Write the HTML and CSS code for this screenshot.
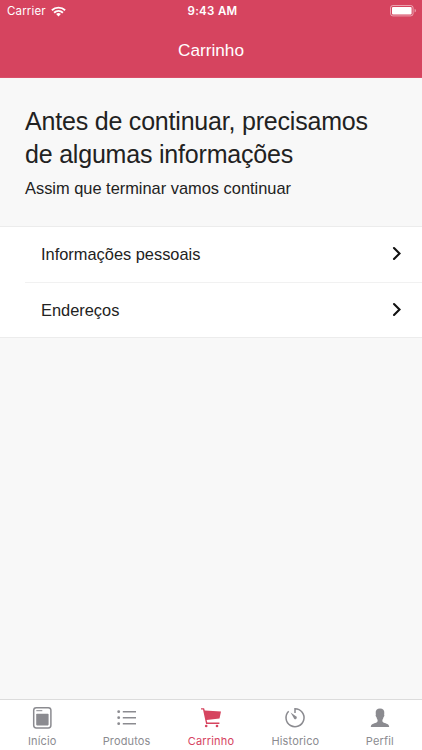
FILE: index.html
```
<!DOCTYPE html>
<html lang="pt-BR">
<head>
  <meta charset="UTF-8">
  <title>Carrinho</title>
  <link rel="stylesheet" href="styles.css">
</head>
<body>
  <header class="header">
    <div class="status-bar">
      <div class="carrier">
        <span>Carrier</span>
        <svg width="15" height="11" viewBox="0 0 15 11" fill="none" stroke="#fff" stroke-width="1.9">
          <path d="M0.9 4.3a9.5 9.5 0 0 1 13.2 0"/>
          <path d="M3.1 6.7a6.3 6.3 0 0 1 8.8 0"/>
          <path d="M7.5 10.5L5.1 8.1a3.4 3.4 0 0 1 4.8 0z" fill="#fff" stroke="none"/>
        </svg>
      </div>
      <div class="time">9:43 AM</div>
      <div class="battery">
        <svg width="27" height="12" viewBox="0 0 27 12">
          <rect x="0.5" y="0.5" width="22.6" height="10.4" rx="2.4" fill="none" stroke="#fff" stroke-opacity="0.5"/>
          <rect x="2" y="2" width="19.6" height="7.4" rx="1" fill="#fff"/>
          <path d="M24.6 3.8c1.8 0.6 1.8 3.2 0 3.8z" fill="#fff" fill-opacity="0.5"/>
        </svg>
      </div>
    </div>
    <div class="title">Carrinho</div>
  </header>

  <main class="content">
    <div class="intro">
      <h1>Antes de continuar, precisamos<br>de algumas informações</h1>
      <p>Assim que terminar vamos continuar</p>
    </div>

    <ul class="list">
      <li class="item">
        <span>Informações pessoais</span>
        <svg width="10" height="15" viewBox="0 0 10 15"><path d="M2 2l5.5 5.5L2 13" fill="none" stroke="#111" stroke-width="2.1" stroke-linecap="round"/></svg>
      </li>
      <li class="item">
        <span>Endereços</span>
        <svg width="10" height="15" viewBox="0 0 10 15"><path d="M2 2l5.5 5.5L2 13" fill="none" stroke="#111" stroke-width="2.1" stroke-linecap="round"/></svg>
      </li>
    </ul>
  </main>

  <nav class="tabs">
    <div class="tab">
      <svg width="24" height="24" viewBox="0 0 24 24">
        <rect x="3.7" y="1.7" width="17.2" height="20.2" rx="2.6" fill="none" stroke="currentColor" stroke-width="1.5"/>
        <path d="M6.3 4.7h6" stroke="currentColor" stroke-width="1"/>
        <rect x="6.2" y="7.8" width="12.4" height="11.6" rx="0.8" fill="currentColor"/>
      </svg>
      <span>Início</span>
    </div>
    <div class="tab">
      <svg width="24" height="24" viewBox="0 0 24 24">
        <g fill="currentColor">
          <circle cx="3.7" cy="5.7" r="1.4"/>
          <circle cx="3.7" cy="11.7" r="1.4"/>
          <circle cx="3.7" cy="17.7" r="1.4"/>
        </g>
        <path d="M7.8 5.7h13.2M7.8 11.7h13.2M7.8 17.7h13.2" stroke="currentColor" stroke-width="1.4"/>
      </svg>
      <span>Produtos</span>
    </div>
    <div class="tab active">
      <svg width="24" height="24" viewBox="0 0 24 24" fill="currentColor">
        <path d="M2 2.3h3.1l0.7 2.2L22 5.4l-1.5 7L7.6 14l0.7 2.6h12.1v1.3H7.1L4 3.6H2z"/>
        <circle cx="7.2" cy="20" r="1.3"/>
        <circle cx="18" cy="20" r="1.3"/>
      </svg>
      <span>Carrinho</span>
    </div>
    <div class="tab">
      <svg width="24" height="24" viewBox="0 0 24 24">
        <path d="M12 7V2.7a9 9 0 1 1-6.3 2.6" fill="none" stroke="currentColor" stroke-width="1.5"/>
        <path d="M7.6 6.6l5.7 3.9a1.5 1.5 0 0 1-2.1 2.2z" fill="currentColor"/>
      </svg>
      <span>Historico</span>
    </div>
    <div class="tab">
      <svg width="24" height="24" viewBox="0 0 24 24" fill="currentColor">
        <path d="M12 2.5c-3 0-4.6 1.9-4.3 4.8l0.2 1.2c-0.6 0.4-0.2 2.2 0.6 2.7 0.3 1.6 0.9 2.1 1.1 2.8 0.2 1.6-0.3 2.2-1.5 2.8-2.3 0.9-5.1 1.1-5.3 4.2h18.4c-0.2-3.1-3-3.3-5.3-4.2-1.2-0.6-1.7-1.2-1.5-2.8 0.2-0.7 0.8-1.2 1.1-2.8 0.8-0.5 1.2-2.3 0.6-2.7l0.2-1.2c0.3-2.9-1.3-4.8-4.3-4.8z"/>
      </svg>
      <span>Perfil</span>
    </div>
  </nav>
</body>
</html>
```
FILE: styles.css
```
* {
  box-sizing: border-box;
}
body {
  margin: 0;
  height: 750px;
  display: flex;
  flex-direction: column;
  overflow: hidden;
  font-family: "Liberation Sans", Arial, sans-serif;
  color: #222;
  background-color: #f8f8f8;
}
svg {
  display: block;
  flex-shrink: 0;
}
.header {
  height: 78px;
  color: #fff;
  background-color: #d6445f;
  border-bottom: 1px solid #d9506a;
}
.status-bar {
  display: grid;
  grid-template-columns: 1fr auto 1fr;
  align-items: center;
  height: 22px;
  padding: 0 5px 0 7px;
  font-family: Inter, sans-serif;
  font-size: 11.5px;
}
.carrier {
  display: flex;
  align-items: center;
  gap: 5px;
  letter-spacing: 0.15px;
}
.time {
  padding-left: 1px;
  font-weight: 600;
  letter-spacing: 0.3px;
}
.battery {
  justify-self: end;
}
.title {
  padding-top: 18px;
  text-align: center;
  font-size: 17.2px;
  line-height: 20px;
}
.content {
  flex: 1;
}
.intro {
  height: 148px;
  padding: 27px 25px 0;
}
.intro h1 {
  margin: 0;
  font-size: 25px;
  font-weight: normal;
  line-height: 33px;
  letter-spacing: -0.2px;
  white-space: nowrap;
}
.intro p {
  margin: 7px 0 0;
  font-size: 16.4px;
  line-height: 20px;
}
.list {
  margin: 0;
  padding: 0 0 0 25px;
  list-style: none;
  background-color: #fff;
  border-top: 1px solid #ececec;
  border-bottom: 1px solid #ececec;
}
.item {
  display: flex;
  align-items: center;
  justify-content: space-between;
  height: 55px;
  padding: 0 20px 0 16px;
  font-size: 16.4px;
}
.item svg {
  margin-bottom: 2px;
}
.item + .item {
  border-top: 1px solid #f1f1f1;
}
.tabs {
  display: grid;
  grid-template-columns: repeat(5, 1fr);
  height: 51px;
  background-color: #fff;
  border-top: 1px solid #dcdcdc;
}
.tab {
  display: flex;
  flex-direction: column;
  align-items: center;
  padding-top: 6px;
  color: #8b8b90;
  font-family: Inter, sans-serif;
  font-size: 11px;
  line-height: 14px;
  letter-spacing: 0.15px;
}
.tab span {
  margin-top: 4px;
}
.tab.active {
  color: #d6445f;
}
```
